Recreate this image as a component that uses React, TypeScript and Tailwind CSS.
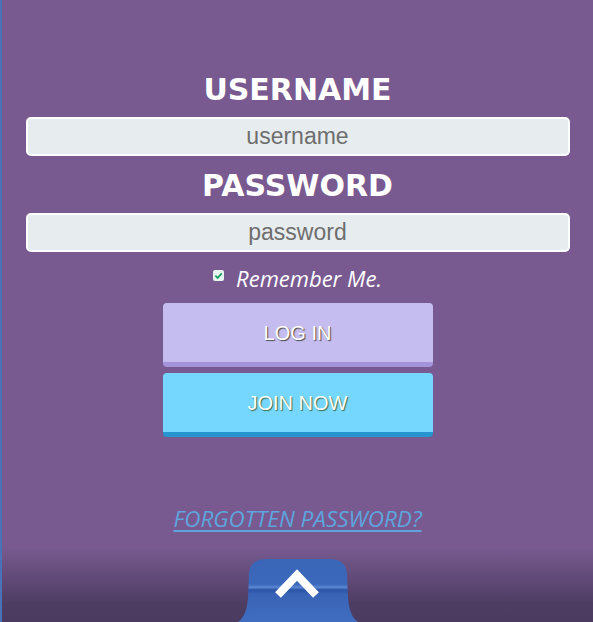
import React, { useState } from 'react';

const TabArrow: React.FC = () => (
  <svg width="124" height="64" viewBox="0 0 124 64" className="block">
    <defs>
      <linearGradient id="tabFill" x1="0" y1="0" x2="0" y2="1">
        <stop offset="0" stopColor="#3a66b8" />
        <stop offset="0.4" stopColor="#3b68ba" />
        <stop offset="0.45" stopColor="#5a86d2" />
        <stop offset="0.49" stopColor="#2a55a6" />
        <stop offset="0.56" stopColor="#3964b6" />
        <stop offset="1" stopColor="#416dc0" />
      </linearGradient>
    </defs>
    <path
      d="M2 64 C 8 60, 11 52, 12 40 L 13 16 C 14 5, 20 1, 32 1 L 92 1 C 104 1, 110 5, 111 16 L 112 40 C 113 52, 116 60, 122 64 Z"
      fill="url(#tabFill)"
    />
    <path d="M42 37 L 61 17 L 80 37" fill="none" stroke="#ffffff" strokeWidth="8" strokeLinecap="butt" strokeLinejoin="miter" />
  </svg>
);

export default function App() {
  const [remember, setRemember] = useState(true);
  const [username, setUsername] = useState('');
  const [password, setPassword] = useState('');

  return (
    <div className="relative h-[622px] w-full overflow-hidden border-l-2 border-[#4a72b8] bg-[linear-gradient(to_bottom,#785a90_0%,#785a90_88%,#4e3d63_97%,#4c3b60_100%)]">
      <div className="flex flex-col items-center pt-[72px]">
        <h2 className="text-[30px] leading-[36px] font-bold text-white font-['DejaVu_Sans',sans-serif]">USERNAME</h2>
        <input
          type="text"
          placeholder="username"
          value={username}
          onChange={(e) => setUsername(e.target.value)}
          className="mt-[9px] h-[39px] w-[544px] rounded-[5px] border-2 border-white bg-[#e7ecee] text-center text-[23px] text-[#555] placeholder:text-[#6e6e6e] outline-none font-['Liberation_Sans',Arial,sans-serif]"
        />

        <h2 className="mt-[12px] text-[30px] leading-[36px] font-bold text-white font-['DejaVu_Sans',sans-serif]">PASSWORD</h2>
        <input
          type="password"
          placeholder="password"
          value={password}
          onChange={(e) => setPassword(e.target.value)}
          className="mt-[9px] h-[39px] w-[544px] rounded-[5px] border-2 border-white bg-[#e7ecee] text-center text-[23px] text-[#555] placeholder:text-[#6e6e6e] outline-none font-['Liberation_Sans',Arial,sans-serif]"
        />

        <label className="mt-[14px] flex h-[24px] items-center gap-[12px] text-white">
          <span
            onClick={() => setRemember(!remember)}
            className="flex h-[11px] w-[11px] items-center justify-center rounded-[2px] bg-[#e9f3f0] -mt-[6px]"
          >
            {remember && (
              <svg width="9" height="9" viewBox="0 0 10 10">
                <path d="M1.5 5.2 L4 7.6 L8.6 2.6" fill="none" stroke="#17a05e" strokeWidth="2" />
              </svg>
            )}
          </span>
          <span className="text-[22px] italic font-['Open_Sans',sans-serif]">Remember Me.</span>
        </label>

        <button className="mt-[13px] h-[64px] w-[270px] rounded-[4px] border-b-[5px] border-[#a493d8] bg-[#c5bdef] text-[20px] text-white font-['Liberation_Sans',Arial,sans-serif] [text-shadow:1px_1px_1px_#4a4a4a]">
          LOG IN
        </button>
        <button className="mt-[6px] h-[64px] w-[270px] rounded-[4px] border-b-[5px] border-[#2594cf] bg-[#76d7fe] text-[20px] text-white font-['Liberation_Sans',Arial,sans-serif] [text-shadow:1px_1px_1px_#3d6b4a]">
          JOIN NOW
        </button>

        <a href="#" className="mt-[66px] text-[22.5px] italic leading-[32px] text-[#5ea5de] underline underline-offset-[3px] font-['Open_Sans',sans-serif]">
          FORGOTTEN PASSWORD?
        </a>
      </div>

      <div className="absolute bottom-0 left-[234px]">
        <TabArrow />
      </div>
    </div>
  );
}
